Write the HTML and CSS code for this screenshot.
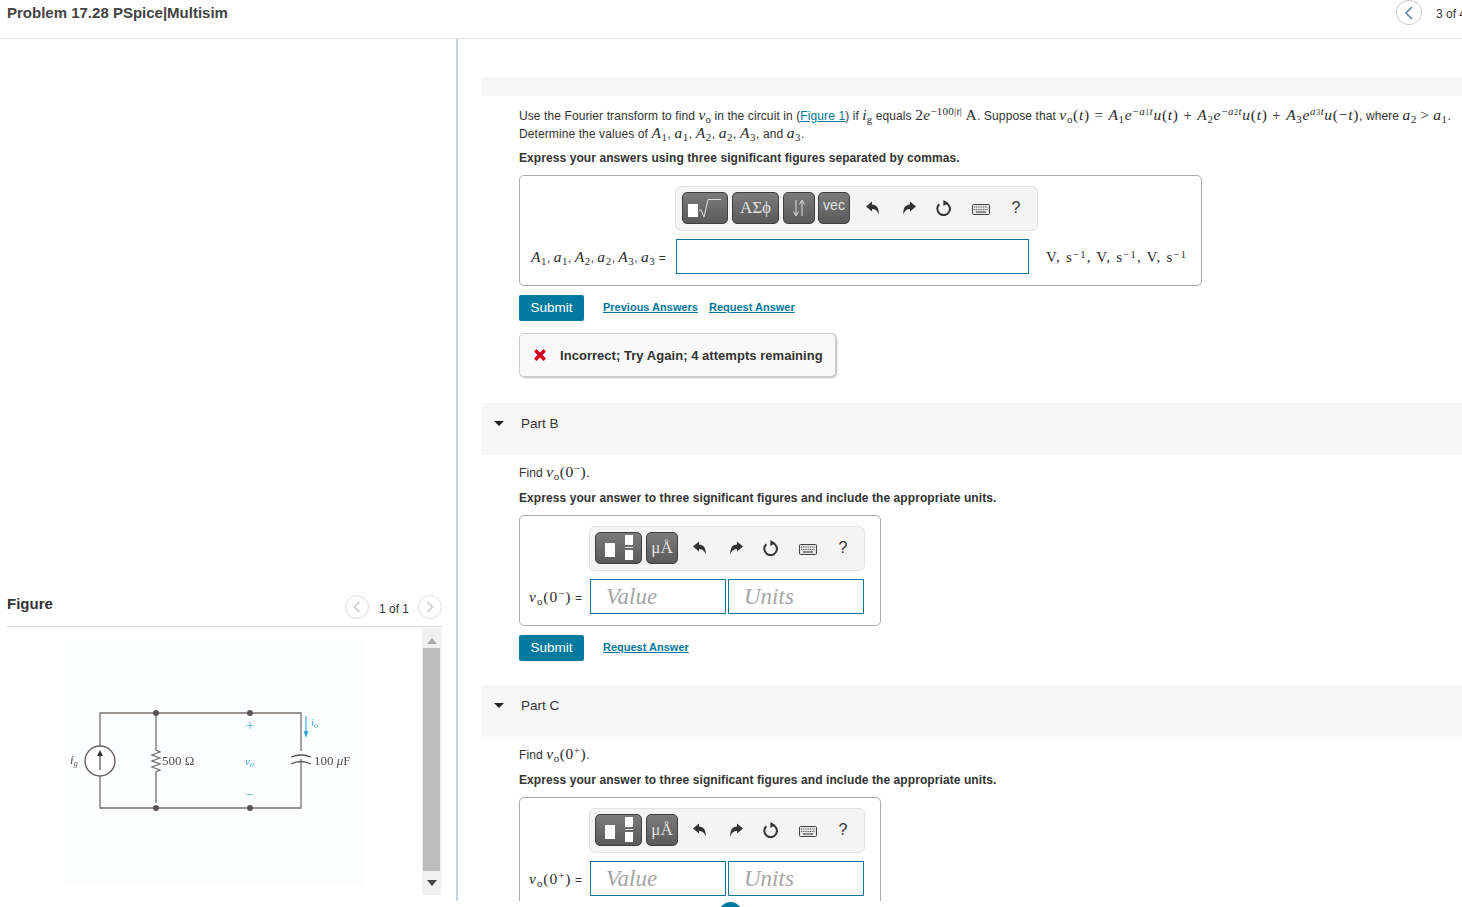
FILE: index.html
```html
<!DOCTYPE html>
<html lang="en">
<head>
<meta charset="utf-8">
<title>Problem 17.28 PSpice|Multisim</title>
<link rel="stylesheet" href="styles.css">
</head>
<body>
<svg class="defs" width="0" height="0" aria-hidden="true">
  <symbol id="i-undo" viewBox="0 0 16 16"><path d="M1 6.500 7 1.500V4.600C11.500 4.800 14.200 8 13.600 14.500 12.600 10.800 10.600 8.900 7 8.900V11.600Z"/></symbol>
  <symbol id="i-redo" viewBox="0 0 16 16"><path d="M15 6.500 9 1.500V4.600C4.500 4.800 1.800 8 2.400 14.500 3.400 10.800 5.400 8.900 9 8.900V11.600Z"/></symbol>
  <symbol id="i-reset" viewBox="0 0 16 16"><path d="M9.800 2.900A6.300 6.300 0 1 1 3.300 4.200" fill="none" stroke="currentColor" stroke-width="2"/><path d="M7.400 0 12.400 2.900 7.400 6Z"/></symbol>
  <symbol id="i-keys" viewBox="0 0 18 11"><rect x=".5" y=".5" width="17" height="10" rx="1" fill="#e4e4e4" stroke="#444"/><path d="M2 3h14M2 5.500h14" stroke="#555" stroke-width="1.200" stroke-dasharray="1 .8" fill="none"/><path d="M4 8h10" stroke="#555" stroke-width="1.200" fill="none"/></symbol>
</svg>

<div class="page">
  <header class="topbar">
    <h1 class="title">Problem 17.28 PSpice|Multisim</h1>
    <div class="pager">
      <span class="round round-big"><svg width="10" height="14" viewBox="0 0 10 14"><path d="M8 1 2 7l6 6" fill="none" stroke="#5a7ea6" stroke-width="1.500"/></svg></span>
      <span class="pager-text">3 of 4</span>
    </div>
  </header>

  <div class="main">
    <aside class="left">
      <div class="figure-head">
        <h2 class="figure-title">Figure</h2>
        <div class="figure-pager">
          <span class="round"><svg width="8" height="12" viewBox="0 0 8 12"><path d="M6.500 1 1.500 6l5 5" fill="none" stroke="#c4c4c4" stroke-width="1.400"/></svg></span>
          <span class="figure-count">1 of 1</span>
          <span class="round"><svg width="8" height="12" viewBox="0 0 8 12"><path d="M1.500 1l5 5-5 5" fill="none" stroke="#c4c4c4" stroke-width="1.400"/></svg></span>
        </div>
      </div>
      <div class="figure-body">
        <div class="circuit">
          <svg width="356" height="258" viewBox="0 -9 356 258">
            <rect x="0" y="3" width="300" height="245" fill="#fcfdfe"/>
            <g fill="none" stroke="#75706c" stroke-width="1.300">
              <path d="M35 109V76H236V114M35 139V171H236V122"/>
              <path d="M91 76V113l4 2-8 3 8 3-8 3 8 3-8 3 8 3-4 2v31"/>
            </g>
            <path d="M226 120Q236 116 246 120" fill="none" stroke="#55504c" stroke-width="1.300"/>
            <path d="M226 127Q236 122 246 127" fill="none" stroke="#55504c" stroke-width="1.300"/>
            <circle cx="35" cy="124" r="15" fill="#fff" stroke="#66615d" stroke-width="1.400"/>
            <path d="M35 133V116" stroke="#55504c" stroke-width="1.200"/>
            <path d="M32 119 35 113 38 119Z" fill="#333"/>
            <g fill="#5a5553"><circle cx="91" cy="76" r="3"/><circle cx="185" cy="76" r="3"/><circle cx="91" cy="171" r="3"/><circle cx="185" cy="171" r="3"/></g>
            <path d="M241 79V97" stroke="#36a8df" stroke-width="1.100"/>
            <path d="M238.500 94 241 101 243.500 94Z" fill="#36a8df"/>
            <text x="5" y="127" class="c-t c-i">i<tspan class="c-sub" dy="2">g</tspan></text>
            <text x="97" y="128" class="c-t">500 Ω</text>
            <text x="249" y="128" class="c-t">100 <tspan font-style="italic">μ</tspan>F</text>
            <text x="181" y="93" class="c-b c-sign">+</text>
            <text x="180" y="128" class="c-b c-i">v<tspan class="c-sub" dy="2">o</tspan></text>
            <text x="181" y="162" class="c-b c-sign">−</text>
            <text x="246" y="89" class="c-b c-i">i<tspan class="c-sub" dy="2">o</tspan></text>
          </svg>
        </div>
        <div class="scrollbar">
          <span class="sb-up"></span>
          <span class="sb-thumb"></span>
          <span class="sb-down"></span>
        </div>
      </div>
    </aside>

    <main class="right">
      <div class="band"></div>
      <div class="part">
        <p class="line first">Use the Fourier transform to find <span class="m tight">v<sub>o</sub></span> in the circuit in (<a class="fig-link">Figure 1</a>) if <span class="m tight">i<sub>g</sub></span> equals <span class="n tight">2<i>e</i><sup>−100|<i>t</i>|</sup> A</span>. Suppose that <span class="m formula">v<sub>o</sub></span><span class="n formula">(<i>t</i>) = <i>A</i><sub>1</sub><i>e</i><sup>−<i>a</i><small>1</small><i>t</i></sup><i>u</i>(<i>t</i>) + <i>A</i><sub>2</sub><i>e</i><sup>−<i>a</i><small>2</small><i>t</i></sup><i>u</i>(<i>t</i>) + <i>A</i><sub>3</sub><i>e</i><sup><i>a</i><small>3</small><i>t</i></sup><i>u</i>(−<i>t</i>)</span>, where <span class="m">a<sub>2</sub></span> <span class="n">&gt;</span> <span class="m">a<sub>1</sub></span>.</p>
        <p class="line second">Determine the values of <span class="m">A<sub>1</sub></span>, <span class="m">a<sub>1</sub></span>, <span class="m">A<sub>2</sub></span>, <span class="m">a<sub>2</sub></span>, <span class="m">A<sub>3</sub></span>, and <span class="m">a<sub>3</sub></span>.</p>
        <p class="instr instr-a">Express your answers using three significant figures separated by commas.</p>

        <div class="answer answer-a">
          <div class="toolbar toolbar-a">
            <span class="btn btn-root"><span class="sq"></span><svg width="24" height="20" viewBox="0 0 24 20"><path d="M1 12h2l3 7L10 1.500h13" fill="none" stroke="#ddd" stroke-width="1"/></svg></span>
            <span class="btn btn-sym sym">ΑΣϕ</span>
            <span class="btn btn-narrow"><svg width="14" height="18" viewBox="0 0 14 18"><path d="M4 1V16M1.500 12.500 4 17 6.500 12.500M10 17V2M7.500 5.500 10 1 12.500 5.500" fill="none" stroke="#ddd" stroke-width="1"/></svg></span>
            <span class="btn btn-narrow btn-vec vec">vec</span>
            <span class="tools">
              <svg class="ic"><use href="#i-undo"/></svg>
              <svg class="ic"><use href="#i-redo"/></svg>
              <svg class="ic"><use href="#i-reset"/></svg>
              <svg class="ic-k"><use href="#i-keys"/></svg>
              <span class="help">?</span>
            </span>
          </div>
          <div class="row">
            <span class="label label-a"><span class="m">A<sub>1</sub></span>, <span class="m">a<sub>1</sub></span>, <span class="m">A<sub>2</sub></span>, <span class="m">a<sub>2</sub></span>, <span class="m">A<sub>3</sub></span>, <span class="m">a<sub>3</sub></span> <span class="eq">=</span></span>
            <span class="input input-long"></span>
            <span class="units">V, s<sup>−1</sup>, V, s<sup>−1</sup>, V, s<sup>−1</sup></span>
          </div>
        </div>

        <div class="actions">
          <span class="submit">Submit</span>
          <a class="action-link">Previous Answers</a>
          <a class="action-link">Request Answer</a>
        </div>
        <div class="feedback">
          <svg width="14" height="14" viewBox="0 0 14 14"><path d="M1 3.500 3.500 1 7 4.500 10.500 1 13 3.500 9.500 7 13 10.500 10.500 13 7 9.500 3.500 13 1 10.500 4.500 7Z" fill="#d8001f"/></svg>
          <span>Incorrect; Try Again; 4 attempts remaining</span>
        </div>
      </div>

      <div class="part-head"><span class="caret"></span><span>Part B</span></div>
      <div class="part part-b">
        <p class="line find">Find <span class="m">v<sub>o</sub></span><span class="n">(0<sup>−</sup>)</span>.</p>
        <p class="instr">Express your answer to three significant figures and include the appropriate units.</p>
        <div class="answer answer-b">
          <div class="toolbar toolbar-b">
            <span class="btn btn-frac"><span class="sq sq-big"></span><span class="frac"><span></span><span></span></span></span>
            <span class="btn btn-mid sym">μÅ</span>
            <span class="tools">
              <svg class="ic"><use href="#i-undo"/></svg>
              <svg class="ic"><use href="#i-redo"/></svg>
              <svg class="ic"><use href="#i-reset"/></svg>
              <svg class="ic-k"><use href="#i-keys"/></svg>
              <span class="help">?</span>
            </span>
          </div>
          <div class="row">
            <span class="label label-b"><span class="m">v<sub>o</sub></span><span class="n">(0<sup>−</sup>)</span> <span class="eq">=</span></span>
            <span class="input input-short">Value</span>
            <span class="input input-short">Units</span>
          </div>
        </div>
        <div class="actions">
          <span class="submit">Submit</span>
          <a class="action-link">Request Answer</a>
        </div>
      </div>

      <div class="part-head part-head-c"><span class="caret"></span><span>Part C</span></div>
      <div class="part part-b">
        <p class="line find">Find <span class="m">v<sub>o</sub></span><span class="n">(0<sup>+</sup>)</span>.</p>
        <p class="instr">Express your answer to three significant figures and include the appropriate units.</p>
        <div class="answer answer-b">
          <div class="toolbar toolbar-b">
            <span class="btn btn-frac"><span class="sq sq-big"></span><span class="frac"><span></span><span></span></span></span>
            <span class="btn btn-mid sym">μÅ</span>
            <span class="tools">
              <svg class="ic"><use href="#i-undo"/></svg>
              <svg class="ic"><use href="#i-redo"/></svg>
              <svg class="ic"><use href="#i-reset"/></svg>
              <svg class="ic-k"><use href="#i-keys"/></svg>
              <span class="help">?</span>
            </span>
          </div>
          <div class="row">
            <span class="label label-b"><span class="m">v<sub>o</sub></span><span class="n">(0<sup>+</sup>)</span> <span class="eq">=</span></span>
            <span class="input input-short">Value</span>
            <span class="input input-short">Units</span>
          </div>
        </div>
      </div>
    </main>
  </div>
  <span class="floating-dot"></span>
</div>
</body>
</html>
```
FILE: styles.css
```css
* { box-sizing: border-box; }
html, body { margin: 0; padding: 0; background: #fff; }
body { font-family: "Liberation Sans", Arial, sans-serif; font-size: 12px; color: #333; overflow: hidden; }
.defs { position: absolute; }
.page { position: relative; width: 1462px; height: 907px; overflow: hidden; }

/* header */
.topbar { height: 39px; border-bottom: 1px solid #e0e0e0; display: flex; justify-content: space-between; padding-left: 7px; overflow: hidden; }
.title { margin: 4px 0 0; font-size: 15px; line-height: 18px; font-weight: bold; color: #444; white-space: nowrap; }
.pager { width: 66px; flex: none; display: flex; align-items: flex-start; gap: 14px; white-space: nowrap; }
.pager-text { font-size: 12px; line-height: 29px; }
.round { width: 24px; height: 24px; border: 1px solid #ddd; border-radius: 50%; display: flex; align-items: center; justify-content: center; flex: none; background: #fff; }
.round-big { width: 26px; height: 25px; border-color: #ccc; }

/* layout */
.main { display: flex; height: 862px; }
.left { width: 458px; flex: none; border-right: 2px solid #c3d3e6; padding: 0 15px 6px 7px; display: flex; flex-direction: column; justify-content: flex-end; }
.figure-head { height: 37px; display: flex; justify-content: space-between; align-items: center; border-bottom: 1px solid #ddd; margin-right: -1px; padding-bottom: 8px; }
.figure-title { margin: 0 0 2px; font-size: 15px; font-weight: bold; color: #333; }
.figure-pager { display: flex; align-items: center; gap: 9px; padding-top: 6px; color: #333; }
.figure-count { padding-top: 3px; margin-left: 1px; }
.figure-body { display: flex; height: 268px; padding-top: 1px; }
.circuit { width: 415px; padding: 0 0 0 58px; }
.circuit svg { display: block; filter: blur(.35px); }
.c-t { font: 13px "Liberation Serif", serif; fill: #55504c; }
.c-b { font: 11px "Liberation Serif", serif; fill: #36a8df; }
.c-sign { font-size: 14px; }
.c-i { font-style: italic; }
.c-sub { font-size: 8px; }

.scrollbar { width: 19px; flex: none; background: #f0f0f0; display: flex; flex-direction: column; align-items: center; }
.sb-up { width: 0; height: 0; border: 5px solid transparent; border-top: 0; border-bottom: 6px solid #a9a9a9; margin: 10px 0 4px; }
.sb-thumb { width: 17px; flex: 1; background: #bdbdbd; }
.sb-down { width: 0; height: 0; border: 5px solid transparent; border-bottom: 0; border-top: 6px solid #444; margin: 9px 0 9px; }

.right { flex: 1; min-width: 0; padding: 38px 0 0 23px; overflow: hidden; }
.band { height: 19px; background: #f7f7f7; }
.part { padding: 10px 0 0 38px; }
.part-b { padding-top: 8px; }

.line { margin: 0; height: 18px; line-height: 18px; white-space: nowrap; letter-spacing: .1px; }
.instr { margin: 7px 0 0; font-weight: bold; line-height: 18px; letter-spacing: .08px; white-space: nowrap; }
.part-b .instr { margin-top: 8px; }

/* math */
.m, .n, .units { font-family: "Liberation Serif", "DejaVu Serif", serif; font-size: 15.500px; letter-spacing: .6px; color: #2c2c2c; }
.m { font-style: italic; }
.m.tight { letter-spacing: .1px; }
.n.tight { letter-spacing: .3px; }
.m.formula { letter-spacing: .7px; }
.n.formula { letter-spacing: .7px; }
.m sub, .n sub { font-style: normal; }
sub, sup { font-size: 70%; line-height: 0; }
sup { vertical-align: 5px; }
sub { vertical-align: -2.500px; }
small { font-size: 70%; }
.fig-link { color: #00769b; text-decoration: underline; }

/* answer box */
.answer { border: 1px solid #aaa; border-radius: 5px; background: #fff; margin-top: 8px; }
.answer-a { width: 683px; height: 111px; padding: 10px 0 0 11px; }
.answer-b { width: 362px; height: 111px; padding: 10px 0 0 9px; }
.toolbar { height: 45px; border: 1px solid #e2e2e2; border-radius: 6px; background: #f4f4f4; display: flex; align-items: center; gap: 4px; padding: 0 0 2px 6px; }
.toolbar-a { width: 363px; margin-left: 144px; }
.toolbar-b { width: 276px; margin-left: 60px; padding-left: 5px; }
.btn { height: 32px; border: 1px solid #3f3f3f; border-radius: 5px; background: linear-gradient(#7b7b7b, #5a5a5a); color: #e2e2e2; display: flex; align-items: center; justify-content: center; flex: none; }
.btn-root { width: 46px; }
.btn-sym, .btn-frac { width: 47px; }
.btn-narrow, .btn-mid { width: 32px; }
.btn-vec { margin-left: -1px; }
.sym { font: 17px "Liberation Serif", serif; }
.vec { font-size: 14px; align-items: flex-start; padding-top: 5px; line-height: 15px; }
.sq { width: 10px; height: 13px; background: #fff; margin-top: 6px; }
.sq-big { height: 14px; margin: 4px 10px 0 0; }
.frac { display: flex; flex-direction: column; gap: 5px; background: linear-gradient(#ddd, #ddd) center / 100% 1px no-repeat; }
.frac span { width: 8px; height: 10px; background: #fff; }
.tools { display: flex; align-items: center; flex: 1; gap: 19.600px; }
.toolbar-a .tools { padding-left: 11px; }
.toolbar-b .tools { padding-left: 10px; }
.ic { width: 16px; height: 16px; fill: #333; color: #333; }
.ic-k { width: 18px; height: 11px; margin-top: 4px; }
.help { font-size: 16px; line-height: 16px; color: #333; margin-left: 2px; }

.row { display: flex; align-items: center; margin-top: 8px; }
.label { flex: none; white-space: nowrap; }
.label-a { width: 145px; }
.label-b { width: 61px; }
.label-a .m { font-size: 15.500px; letter-spacing: .55px; }
.label-b .m, .label-b .n { font-size: 15.500px; letter-spacing: 1px; }
.eq { font-size: 12px; }
.input { height: 35px; border: 1px solid #00769b; background: #fff; display: block; }
.input-long { width: 353px; }
.input-short { width: 136px; margin-right: 2px; padding-left: 15px; font: italic 23px/33px "Liberation Serif", serif; color: #a6a6a6; }
.units { margin-left: 17px; padding-top: 2px; font-size: 15px; letter-spacing: 1.200px; white-space: nowrap; }
.units sup { vertical-align: 4px; }

/* actions */
.actions { display: flex; align-items: center; margin-top: 9px; }
.submit { width: 65px; height: 26px; background: #007a9e; border-radius: 2px; color: #fff; font-size: 13.500px; line-height: 25px; text-align: center; margin-right: 19px; }
.action-link { font-size: 11px; font-weight: bold; color: #00769b; text-decoration: underline; margin-right: 11px; padding-bottom: 2px; }
.feedback { width: 317px; height: 44px; margin-top: 12px; border: 1px solid #ccc; border-radius: 5px; background: #f9f9f9; box-shadow: 1px 1px 2px #bbb; display: flex; align-items: center; padding-left: 13px; gap: 13px; font-size: 13px; letter-spacing: .04px; font-weight: bold; white-space: nowrap; color: #333; }
.feedback svg { flex: none; }

/* part bars */
.part-head { margin-top: 26px; height: 52px; background: #f7f7f7; display: flex; align-items: center; padding: 0 0 12px 13px; gap: 17px; font-size: 13.500px; color: #333; }
.part-head-c { margin-top: 24px; }
.caret { width: 0; height: 0; border: 5px solid transparent; border-bottom: 0; border-top: 5px solid #222; flex: none; }

.floating-dot { position: absolute; left: 719px; top: 902px; width: 23px; height: 23px; border-radius: 50%; background: #007a9e; }
```
